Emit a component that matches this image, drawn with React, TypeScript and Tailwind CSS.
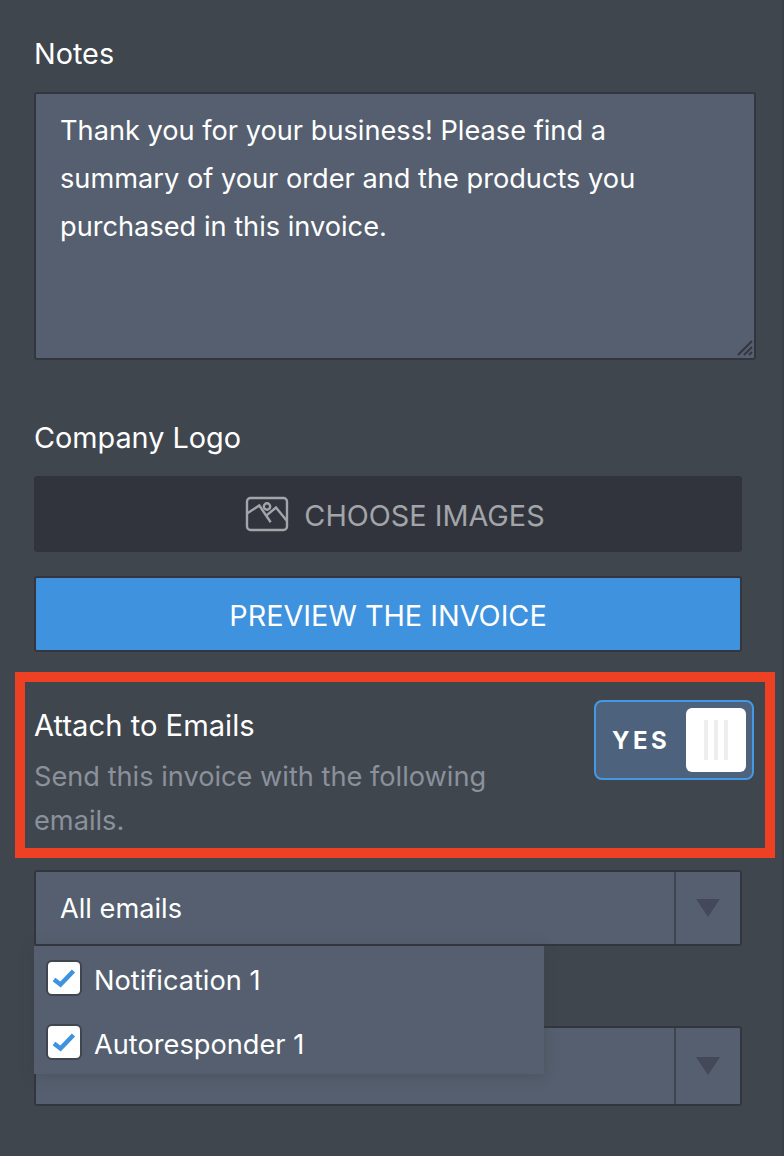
import React from 'react';

const Caret = () => (
    <div className="w-[66px] flex-shrink-0 self-stretch border-l-2 border-[#40464f] flex items-center justify-center">
        <svg width="24" height="18" viewBox="0 0 24 18" className="block">
            <path d="M0 0H24L12 18Z" fill="#434959" />
        </svg>
    </div>
);

const Select = ({ label, className }: { label?: string; className: string }) => (
    <div className={`w-[708px] flex items-center bg-[#555f6f] border-2 border-[#33363f] rounded-[3px] ${className}`}>
        <div className="flex-1 pl-6 pt-0.5 text-[27.2px] text-white">{label}</div>
        <Caret />
    </div>
);

const Check = () => (
    <div className="w-9 h-9 flex-shrink-0 bg-white border-2 border-[#40464f] rounded-[6px] flex items-center justify-center">
        <svg width="24" height="20" viewBox="0 0 24 20" className="block">
            <path d="M2 11.5L8.5 16.5L21.5 3" fill="none" stroke="#3e92de" strokeWidth="4.5" />
        </svg>
    </div>
);

const ImageIcon = () => (
    <svg width="44" height="36" viewBox="0 0 44 36" fill="none" stroke="#a2a5a9" strokeWidth="2.4" className="block">
        <rect x="2" y="2" width="40" height="32" rx="3.5" />
        <circle cx="22" cy="10.5" r="3.2" />
        <path d="M2 17.5L14.3 9.5L25.7 26.2M20.7 20.2L31 11.5L42 25" />
    </svg>
);

export default function App() {
    return (
        <div className="w-[784px] h-[1156px] overflow-hidden bg-[#40464e] border-r-2 border-[#3a4048] pt-[34px] pl-[34px] font-['Inter',sans-serif] text-white">
            <div className="text-[28.8px] leading-[40px] mb-[18px]">Notes</div>
            <div className="relative w-[722px] h-[268px]">
                <textarea
                    readOnly
                    className="block w-full h-full resize-none bg-[#555f6f] border-2 border-[#33363f] rounded-[3px] pl-6 pr-6 pt-[13px] text-[27.2px] leading-[48px] text-white outline-none"
                    defaultValue="Thank you for your business! Please find a summary of your order and the products you purchased in this invoice."
                />
                <svg width="16" height="16" viewBox="0 0 16 16" className="absolute right-[3px] bottom-[4px]" stroke="#33363f" strokeWidth="2">
                    <path d="M1 15L15 1M7 15L15 7M12 15L15 12" />
                </svg>
            </div>
            <div className="text-[28.8px] leading-[40px] mt-[58px] mb-[18px]">Company Logo</div>
            <div className="w-[708px] h-[76px] bg-[#31343c] rounded-[3px] flex items-center justify-center gap-[15px] pl-[14px] text-[28.8px] text-[#a2a5a9]">
                <ImageIcon />
                <span className="pt-[3px]">CHOOSE IMAGES</span>
            </div>
            <div className="w-[708px] h-[76px] mt-6 bg-[#3e92de] border-2 border-[#33363f] rounded-[3px] flex items-center justify-center pt-1 text-[28.8px] text-white">
                PREVIEW THE INVOICE
            </div>
            <div className="w-[760px] h-[186px] ml-[-19px] mt-5 border-[10px] border-[#ee4123] flex justify-between pl-[9px] pr-[11px] pt-[24px]">
                <div>
                    <div className="text-[29.2px] leading-[40px] text-white">Attach to Emails</div>
                    <div className="w-[500px] mt-[9px] text-[27.2px] leading-[44px] text-[#8b919b]">Send this invoice with the following emails.</div>
                </div>
                <div className="w-40 h-20 mt-[-6px] flex-shrink-0 bg-[#4c627d] border-2 border-[#4599e4] rounded-[8px] flex items-center justify-between pl-4 pr-[6px]">
                    <span className="pt-0.5 text-[24px] font-bold tracking-[3.5px] text-white">YES</span>
                    <div className="w-[60px] h-16 bg-white rounded-[6px] flex items-center justify-center gap-[6px]">
                        <div className="w-1 h-10 bg-[#eeeeee]" />
                        <div className="w-1 h-10 bg-[#eeeeee]" />
                        <div className="w-1 h-10 bg-[#eeeeee]" />
                    </div>
                </div>
            </div>
            <div className="relative mt-3">
                <Select label="All emails" className="h-[76px]" />
                <Select className="h-20 mt-20" />
                <div className="absolute left-0 top-[76px] w-[510px] h-[128px] bg-[#555f6f] shadow-[0_2px_12px_rgba(60,60,60,0.35)] pl-3">
                    <div className="h-16 flex items-center gap-3 text-[27.2px] text-white">
                        <Check />
                        <span className="pt-[7px]">Notification 1</span>
                    </div>
                    <div className="h-16 flex items-center gap-3 text-[27.2px] text-white">
                        <Check />
                        <span className="pt-[7px]">Autoresponder 1</span>
                    </div>
                </div>
            </div>
        </div>
    );
}
